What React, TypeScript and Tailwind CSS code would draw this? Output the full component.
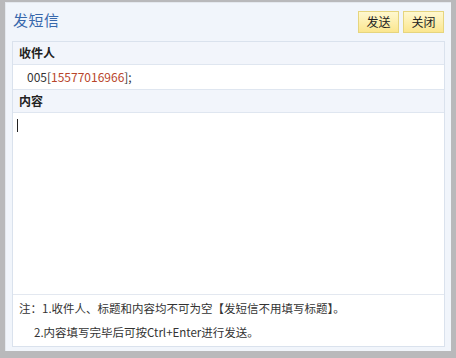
import React from "react";

const FONT = { fontFamily: '"Noto Sans CJK SC", "Noto Sans", sans-serif' };

const YellowButton: React.FC<{ label: string }> = ({ label }) => (
  <button
    className="h-[22px] w-[41px] text-[12px] text-[#222] border border-[#e6d57e] bg-gradient-to-b from-[#fff8cf] to-[#fbe68e] leading-none"
    style={FONT}
  >
    {label}
  </button>
);

const SectionHeader: React.FC<{ title: string }> = ({ title }) => (
  <div className="h-[23px] flex items-center px-[6px] bg-[#f2f5fb] border-b border-[#dfe6f0] text-[12px] font-bold text-[#222]">
    {title}
  </div>
);

export default function App() {
  return (
    <div
      className="w-[456px] h-[358px] bg-[#b9b9bb] pl-[5px] pr-[5px] pt-[2px] pb-[7px]"
      style={FONT}
    >
      <div className="h-full bg-[#f1f5fb] border-l border-t border-[#e4e8ee] flex flex-col px-[6px]">
        {/* Title bar */}
        <div className="h-[38px] flex items-center justify-between shrink-0">
          <span className="text-[15px] text-[#3868ac] pl-[1px] pb-[3px] tracking-[0.5px]">发短信</span>
          <div className="flex gap-[4px] pr-[1px]">
            <YellowButton label="发送" />
            <YellowButton label="关闭" />
          </div>
        </div>

        {/* Panel */}
        <div className="flex-1 flex flex-col border border-[#dae2ed] bg-white mb-[4px]">
          <SectionHeader title="收件人" />
          <div className="h-[25px] flex items-center pl-[14px] text-[12px] text-[#333] border-b border-[#dfe6f0]">
            005[<span className="text-[#b8452a]">15577016966</span>];
          </div>
          <SectionHeader title="内容" />
          <div className="flex-1 relative border-b border-[#e3e8f0]">
            <div className="absolute left-[4px] top-[6px] w-[1px] h-[13px] bg-[#222]" />
          </div>
          <div className="h-[51px] flex flex-col justify-center pl-[6px] text-[11.5px] text-[#333] gap-[7px]">
            <div>注：1.收件人、标题和内容均不可为空【发短信不用填写标题】。</div>
            <div className="pl-[15px]">2.内容填写完毕后可按Ctrl+Enter进行发送。</div>
          </div>
        </div>
      </div>
    </div>
  );
}
